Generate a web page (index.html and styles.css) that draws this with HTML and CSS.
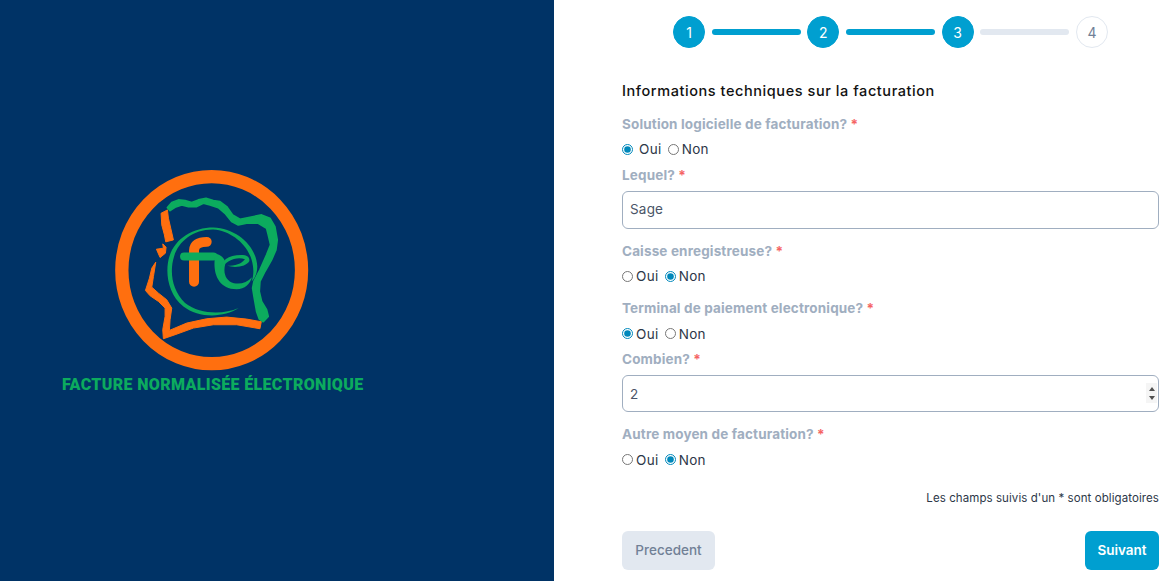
FILE: index.html
```html
<!DOCTYPE html>
<html lang="fr">
<head>
  <meta charset="UTF-8">
  <meta name="viewport" content="width=device-width, initial-scale=1.0">
  <title>Facture Normalisée Électronique</title>
  <link rel="stylesheet" href="styles.css">
</head>
<body>
  <div class="page">
    <aside class="brand">
      <div class="brand-logo">
        <svg class="logo-mark" viewBox="0 0 990 640" aria-hidden="true">
          <ellipse cx="485" cy="331" rx="270" ry="281" fill="none" stroke="#ff6f0f" stroke-width="40"/>
          <!-- north and east coast -->
          <path class="logo-green" d="M352 143 L365 128 L385 120 L405 122 L425 128 L445 120 L468 115 L490 122 L510 125 L530 140 L548 165 L570 178 L600 172 L635 165 L660 175 L675 200 L682 240 L678 270 L665 300 L645 335 L630 365 L628 395 L635 425 L650 450 L655 470 L640 486 L628 478 L620 455 L612 410 L608 385 L612 365 L630 330 L650 285 L662 255 L655 225 L650 205 L625 190 L590 190 L565 195 L545 185 L525 160 L505 143 L480 135 L460 130 L440 140 L415 140 L395 135 L375 142 L360 152 Z"/>
          <!-- west and south coast -->
          <path class="logo-orange" d="M333 160 L352 150 L355 175 L362 205 L370 240 L347 246 L343 225 L335 195 Z"/>
          <path class="logo-orange" d="M319 268 L340 265 L338 252 L348 262 L346 280 L330 293 Z"/>
          <path class="logo-orange" d="M317 307 L305 325 L298 355 L286 392 L300 408 L325 425 L345 445 L345 470 L338 510 L340 537 L375 525 L430 505 L490 495 L560 495 L630 507 L634 486 L590 478 L530 472 L470 477 L410 490 L358 512 L360 480 L365 445 L350 420 L325 400 L305 382 L310 350 Z"/>
          <!-- ring around the letters -->
          <path fill="#0cab5e" d="M566 445 C520 475 445 475 400 440 C350 400 345 330 358 290 C375 235 430 203 490 203 C560 205 620 260 622 320 C622 340 615 355 605 365 C612 345 612 325 605 300 C590 250 540 212 490 209 C430 208 385 245 372 290 C358 335 365 390 405 430 C450 465 520 465 566 445 Z"/>
          <!-- f -->
          <path fill="none" stroke="#ff6f0f" stroke-width="30" stroke-linecap="round" d="M432 366 L432 272 C432 255 445 246 470 246"/>
          <path fill="none" stroke="#0cab5e" stroke-width="24" stroke-linecap="round" d="M402 290 L490 290"/>
          <!-- e -->
          <path fill="#0cab5e" d="M490 280 C512 282 526 296 526 312 C518 340 528 364 552 370 C572 374 592 368 606 352 C600 372 585 388 560 388 C505 388 490 340 494 300 Z"/>
          <path fill="#0cab5e" d="M510 332 C512 300 540 282 585 286 C595 288 600 296 598 304 C590 318 560 326 532 318 C555 318 575 312 585 298 C560 290 528 300 510 332 Z"/>
        </svg>
        <div class="brand-name">FACTURE NORMALISÉE ÉLECTRONIQUE</div>
      </div>
    </aside>

    <main class="content">
      <div class="stepper">
        <span class="step done">1</span>
        <span class="step-bar done"></span>
        <span class="step done">2</span>
        <span class="step-bar done"></span>
        <span class="step done">3</span>
        <span class="step-bar"></span>
        <span class="step">4</span>
      </div>

      <form class="form">
        <h2 class="form-title">Informations techniques sur la facturation</h2>

        <div class="field tight">
          <div class="label">Solution logicielle de facturation? <span class="req">*</span></div>
          <div class="choices wide">
            <label class="choice"><input type="radio" name="logiciel" checked> Oui</label>
            <label class="choice"><input type="radio" name="logiciel"> Non</label>
          </div>
        </div>

        <div class="field">
          <div class="label">Lequel? <span class="req">*</span></div>
          <input class="text-input" type="text" value="Sage">
        </div>

        <div class="field">
          <div class="label">Caisse enregistreuse? <span class="req">*</span></div>
          <div class="choices">
            <label class="choice"><input type="radio" name="caisse"> Oui</label>
            <label class="choice"><input type="radio" name="caisse" checked> Non</label>
          </div>
        </div>

        <div class="field tight">
          <div class="label">Terminal de paiement electronique? <span class="req">*</span></div>
          <div class="choices">
            <label class="choice"><input type="radio" name="tpe" checked> Oui</label>
            <label class="choice"><input type="radio" name="tpe"> Non</label>
          </div>
        </div>

        <div class="field">
          <div class="label">Combien? <span class="req">*</span></div>
          <div class="number-wrap">
            <input class="text-input number" type="number" value="2">
            <span class="spin"><i class="spin-up"></i><i class="spin-down"></i></span>
          </div>
        </div>

        <div class="field">
          <div class="label">Autre moyen de facturation? <span class="req">*</span></div>
          <div class="choices">
            <label class="choice"><input type="radio" name="autre"> Oui</label>
            <label class="choice"><input type="radio" name="autre" checked> Non</label>
          </div>
        </div>

        <p class="note">Les champs suivis d'un * sont obligatoires</p>

        <div class="actions">
          <button class="btn btn-back" type="button">Precedent</button>
          <button class="btn btn-next" type="button">Suivant</button>
        </div>
      </form>
    </main>
  </div>
</body>
</html>
```

FILE: styles.css
```css
:root {
  --navy: #003366;
  --blue: #009fd0;
  --green: #0cab5e;
  --orange: #ff6f0f;
  --gray-border: #a0aec0;
  --gray-light: #e2e8f0;
}

* {
  box-sizing: border-box;
}

body {
  margin: 0;
  font-family: 'Inter', sans-serif;
  color: #1a202c;
  background-color: #ffffff;
  overflow: hidden;
}

.page {
  display: flex;
  height: 581px;
}

.brand {
  width: 554px;
  flex-shrink: 0;
  background-color: var(--navy);
  display: flex;
  align-items: flex-start;
  padding: 160px 0 0 50px;
}

.brand-logo {
  width: 330px;
}

.logo-mark {
  display: block;
  width: 330px;
  height: 213px;
}

.logo-green {
  fill: var(--green);
  stroke: var(--green);
  stroke-width: 5;
  stroke-linejoin: round;
}

.logo-orange {
  fill: var(--orange);
  stroke: var(--orange);
  stroke-width: 3;
  stroke-linejoin: round;
}

.brand-name {
  margin: 3px 0 0 12px;
  font-family: 'Roboto', sans-serif;
  font-size: 16px;
  font-weight: 900;
  line-height: 18px;
  letter-spacing: 0.35px;
  white-space: nowrap;
  color: var(--green);
}

.content {
  flex: 1;
  padding: 16px 14px 0 68px;
}

.stepper {
  display: flex;
  align-items: center;
  gap: 6.5px;
  width: 435px;
  margin: 0 auto;
}

.step {
  width: 32px;
  height: 32px;
  flex-shrink: 0;
  display: flex;
  align-items: center;
  justify-content: center;
  border: 1px solid var(--gray-light);
  border-radius: 50%;
  font-size: 14px;
  color: #718096;
}

.step.done {
  background-color: var(--blue);
  border-color: var(--blue);
  color: #fff;
}

.step-bar {
  flex: 1;
  height: 6px;
  border-radius: 3px;
  background-color: var(--gray-light);
}

.step-bar.done {
  background-color: var(--blue);
}

.form {
  margin-top: 33px;
}

.form-title {
  margin: 0 0 13px;
  font-size: 14.5px;
  font-weight: 500;
  line-height: 20px;
  letter-spacing: 0.57px;
  color: #111;
}

.field {
  margin-bottom: 12px;
}

.field.tight {
  margin-bottom: 5.5px;
}

.label {
  margin-bottom: 6px;
  font-size: 13.5px;
  font-weight: 700;
  line-height: 20px;
  letter-spacing: 0.15px;
  color: var(--gray-border);
}

.req {
  color: #f56565;
}

.choices {
  display: flex;
  gap: 6px;
  height: 20px;
  margin-top: -0.5px;
  align-items: center;
}

.choices.wide {
  height: 20.5px;
  margin-top: -1px;
  padding-bottom: 0.5px;
}

.choice {
  display: flex;
  align-items: center;
  font-size: 13.5px;
  line-height: 20px;
  letter-spacing: 0.35px;
  color: #2d3748;
}

.choice input {
  width: 11px;
  height: 11px;
  margin: 0 3px 0 0;
  accent-color: #0088bb;
}

.choices.wide .choice:first-child input {
  margin-right: 6px;
}

.text-input {
  display: block;
  width: 100%;
  height: 37.5px;
  padding: 0 7px 1px;
  border: 1px solid var(--gray-border);
  border-radius: 6px;
  font-family: inherit;
  font-size: 13.5px;
  letter-spacing: 0.2px;
  color: #4a5568;
  background-color: #fff;
}

.number-wrap {
  position: relative;
  margin-top: 1px;
}

.text-input.number {
  height: 37px;
  padding-bottom: 0;
  appearance: textfield;
}

.text-input.number::-webkit-inner-spin-button {
  appearance: none;
  margin: 0;
}

.spin {
  position: absolute;
  top: 8px;
  right: 2px;
  width: 11px;
  height: 20px;
  display: flex;
  flex-direction: column;
  align-items: center;
  justify-content: center;
  gap: 5px;
  background-color: #f5f5f5;
}

.spin i {
  width: 0;
  height: 0;
  border-left: 3.5px solid transparent;
  border-right: 3.5px solid transparent;
}

.spin-up {
  border-bottom: 4px solid #505050;
}

.spin-down {
  border-top: 4px solid #505050;
}

.note {
  margin: 20px 0 25px;
  font-size: 11.5px;
  line-height: 16px;
  letter-spacing: 0.08px;
  text-align: right;
  color: #2d3748;
}

.actions {
  display: flex;
  justify-content: space-between;
}

.btn {
  height: 39px;
  border: none;
  border-radius: 6px;
  font-family: inherit;
  font-size: 13.5px;
  font-weight: 500;
  cursor: pointer;
}

.btn-back {
  width: 93px;
  background-color: var(--gray-light);
  color: #718096;
}

.btn-next {
  width: 74px;
  background-color: var(--blue);
  color: #fff;
  font-weight: 600;
}
```
